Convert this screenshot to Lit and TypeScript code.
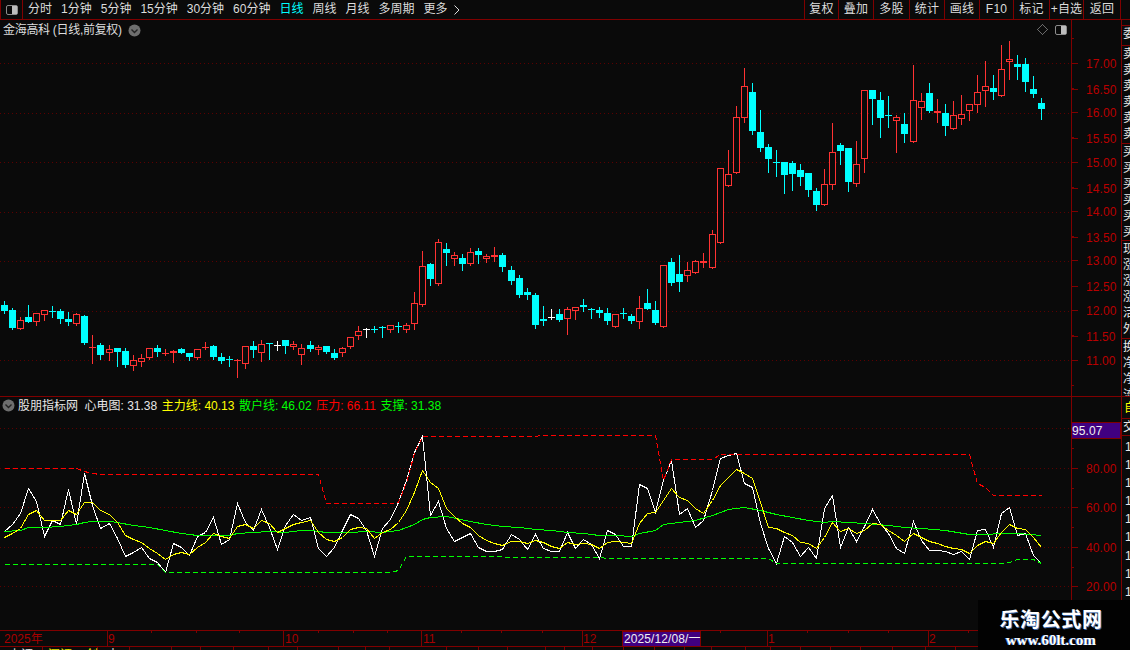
import { LitElement, html, css, svg } from "lit";
import { customElement } from "lit/decorators.js";

type C = [number, number, number, number, string];
const conv = (base: number, rows: C[]): C[] =>
  rows.map(([h, t, b, l, c]) => [
    Math.round(base + h / 3),
    Math.round(base + t / 3),
    Math.round(base + b / 3),
    Math.round(base + l / 3),
    c,
  ]);

const candles: C[] = [
  ...conv(290, [
    [33,44,62,70,"c"],[55,61,113,117,"c"],[82,91,116,117,"r"],[45,82,95,96,"c"],[68,70,97,105,"r"],
    [60,61,76,90,"r"],[48,64,64,80,"c"],[58,64,87,98,"c"],[67,88,95,104,"c"],[70,73,103,104,"r"],
    [75,78,158,161,"c"],[135,170,170,218,"r"],[160,166,194,206,"c"],[166,176,190,209,"r"],[174,174,185,227,"c"],
    [175,183,225,230,"c"],[195,211,227,239,"r"],[192,205,215,227,"r"],[174,175,205,207,"r"],[166,175,186,197,"c"],
    [178,190,193,194,"r"],[180,184,190,216,"r"],[175,178,188,190,"c"],[188,190,200,209,"c"],[178,178,203,206,"r"],
    [157,172,175,177,"r"],[166,168,201,207,"c"],[188,201,212,218,"c"],[197,207,210,228,"c"],[208,211,213,260,"r"],
    [168,169,221,233,"r"],[154,168,179,201,"c"],[151,163,190,212,"r"],[160,160,162,207,"c"],[154,166,166,179,"w"],
    [150,151,167,188,"c"],[152,161,170,176,"r"],[162,175,196,221,"r"],[154,166,176,182,"c"],[165,170,181,191,"r"],
    [168,168,185,188,"c"],[178,190,205,206,"c"],[172,173,190,197,"r"],[142,142,170,175,"r"],[108,122,138,146,"r"],
  ]),
  ...conv(230, [
    [295,297,297,320,"w"],[288,296,296,306,"c"],[288,291,291,320,"c"],[286,286,301,305,"r"],[276,289,289,305,"c"],
    [280,286,299,305,"r"],[186,220,283,296,"r"],[64,109,224,227,"r"],[100,103,146,165,"c"],[28,37,163,164,"r"],
    [39,57,69,105,"c"],[67,76,86,105,"r"],[72,84,102,120,"c"],[55,67,103,106,"r"],[54,63,75,99,"c"],
    [72,79,87,96,"r"],[52,76,82,93,"r"],[69,75,111,123,"c"],[108,120,153,162,"c"],[135,144,195,200,"c"],
    [174,186,195,207,"c"],[190,195,285,294,"c"],[228,267,273,285,"c"],[237,262,262,267,"w"],[237,252,270,273,"c"],
    [231,238,266,312,"r"],[232,232,242,267,"r"],[207,225,231,243,"c"],[234,237,237,264,"c"],[231,240,249,261,"c"],
    [234,249,273,282,"c"],[253,253,290,290,"r"],[234,249,249,264,"c"],[252,258,273,279,"c"],[198,235,275,294,"r"],
    [177,219,237,237,"c"],[213,240,279,282,"c"],[106,106,290,290,"r"],[84,96,159,165,"c"],[75,132,156,183,"c"],
    [96,121,139,153,"r"],[90,94,128,129,"r"],[69,94,98,111,"r"],[0,13,113,114,"r"],
  ]),
  ...conv(60, [
    [325,325,549,549,"r"],[270,343,377,378,"r"],[138,172,338,338,"r"],[24,79,173,186,"r"],[69,96,213,222,"c"],
    [150,216,264,273,"c"],[252,261,297,336,"c"],[270,306,309,348,"c"],[306,306,345,399,"c"],[303,309,342,390,"c"],
    [312,330,351,375,"c"],[339,339,390,408,"c"],[384,393,435,450,"c"],[327,373,434,435,"r"],[189,277,374,387,"r"],
    [249,255,273,312,"c"],[264,264,366,393,"c"],[243,313,371,378,"r"],[90,91,298,336,"r"],[90,90,117,192,"c"],
    [96,120,174,231,"c"],[108,165,168,201,"c"],[165,172,182,276,"r"],[159,192,222,246,"c"],[15,121,245,245,"r"],
    [99,124,143,177,"r"],[69,99,153,156,"c"],[117,153,159,186,"r"],[132,159,198,225,"c"],[123,166,206,206,"r"],
    [105,163,176,192,"r"],[133,133,152,180,"r"],[45,97,134,156,"r"],[3,79,92,138,"r"],[45,84,96,117,"c"],
  ]),
  ...conv(0, [
    [135,208,287,287,"r"],[123,178,185,236,"r"],[165,192,201,237,"c"],[174,192,246,273,"c"],[228,267,282,290,"c"],[294,309,327,357,"c"],
  ]),
];

const cx = (i: number) => Math.round(4 + 8.04 * i);
const RED = "#ff3232";
const CYAN = "#00ffff";

const abs = (base: number, v: number[], start = 0) => v.map((y, k) => [start + k, base + y / 3] as [number, number]);
const keyed = (base: number, v: number[][]) => v.map(([i, y]) => [i, base + y / 3] as [number, number]);
const poly = (p: [number, number][]) => p.map(([i, y]) => `${cx(i) + 0.5},${Math.round(y) + 0.5}`).join(" ");

const white = [
  ...abs(395, [408,388,355,280,318,424,374,388,282,386,235,330,400,385,430,484,470,455,488,500,530,445,455,480,424,410,367,448,432,325,380,405,343,395,462,390,358,375,365,458,484,455,405,358,368,405,484,400,372,322,255,170,122,360,318,400]),
  ...abs(425, [348,335,323,366,378,379,373,328,342,372,327,370,379,379,320,370,343,358,400,316,328,364,364], 56),
  ...abs(420, [192,205,275,180,120,282,265,322,300,210,115,106,100,188,200,310,385,428,348,365,407,382,415,265,225,382,320,362,318,268,310,340,385,400,303,360,390,390,394,403,393,417,330,327,382,280,262,345,340,405,430], 79),
];
const yellow = [
  ...abs(395, [427,415,398,358,345,375,374,375,345,358,320,322,345,358,380,420,433,440,460,475,493,478,470,477,455,440,415,424,430,393,388,398,376,385,412,400,388,382,375,410,432,437,425,402,395,400,428,410,402,380,345,290,224,262,280,340]),
  ...abs(425, [272,295,305,330,345,355,361,349,349,355,345,352,362,370,352,357,355,358,370,352,347,352,354], 56),
  ...abs(420, [310,280,275,240,205,230,240,265,280,240,195,170,147,160,175,245,322,325,335,345,365,370,385,350,305,332,325,338,330,310,312,330,345,362,340,350,362,370,378,385,388,400,375,362,368,335,312,325,328,350,380], 79),
];
const green = [
  ...keyed(395, [[0,408],[2,405],[3,396],[5,395],[7,394],[9,388],[10,380],[11,377],[13,378],[14,382],[16,390],[18,395],[20,406],[22,415],[24,421],[26,419],[28,420],[29,414],[31,410],[33,409],[35,411],[37,406],[38,404],[40,410],[43,412],[45,408],[47,412],[49,405],[50,397],[51,388],[52,372],[53,366],[55,364]]),
  ...keyed(425, [[58,287],[60,296],[62,304],[64,306],[66,311],[68,316],[70,321],[72,325],[74,329],[76,331],[78,334]]),
  ...keyed(420, [[79,340],[81,330],[82,311],[84,307],[86,300],[88,285],[90,268],[92,262],[94,270],[96,283],[98,290],[100,300],[102,305],[103,302],[105,307],[107,310],[110,315],[112,320],[114,323],[117,330],[120,342],[122,343],[124,340],[126,338],[129,345]]),
];
const redDash = [
  ...keyed(395, [[0,220],[9,220],[10,229],[11,233],[12,236],[39,236],[40,325],[48,325],[49,320],[50,262],[51,175],[52,122]]),
  ...keyed(420, [[81,46],[82,180],[83,118],[88,118],[89,103],[120,103],[121,188],[122,200],[123,226],[129,226]]),
];
const greenDash = [
  ...keyed(395, [[0,508],[19,508],[20,532],[48,532],[49,525],[50,484]]),
  ...keyed(425, [[74,395]]),
  ...keyed(420, [[75,415],[95,415],[96,430],[124,430],[125,425],[126,418],[128,418],[129,430]]),
];

const mainGrid = [63, 113, 162, 212, 261, 311, 360];
const mainLabels: [string, number][] = [
  ["17.00",63],["16.50",89],["16.00",112],["15.50",138],["15.00",162],["14.50",188],["14.00",211],
  ["13.50",237],["13.00",260],["12.50",286],["12.00",310],["11.50",336],["11.00",360],
];
const indGrid = [428, 468, 507, 547, 586];
const indLabels: [string, number][] = [["80.00",468],["60.00",507],["40.00",547],["20.00",586]];
const monthLabels: [string, number][] = [["2025年",4],["9",108],["10",285],["11",423],["12",583],["1",768],["2",929]];
const monthLines = [107, 283, 421, 582, 767, 928];
const dateTicks = [151, 196, 239, 318, 353, 387, 461, 501, 542, 720, 807, 848, 888, 968];
const underTicks = [42,97,129,171,200,233,268,297,338,365,389,446,478,507,545,564,592,623,654,684,711,745,770,800,830,860,892,925,955];

const tabs = ["分时","1分钟","5分钟","15分钟","30分钟","60分钟","日线","周线","月线","多周期"];
const actions = ["复权","叠加","多股","统计","画线","F10","标记","+自选","返回"];
const strip = [["卖","卖","卖","卖","卖","卖"],["买","买","买","买","买","买"],["现","涨","涨","涨","活","外"],["换","净","净","流","收","振"]];

const panelIcon = svg`<rect x="0.5" y="0.5" width="11" height="9" rx="1.5" fill="none" stroke="#8c8c8c"/><rect x="6" y="1" width="5" height="8" fill="#bdbdbd"/>`;
const circleIcon = svg`<circle cx="6.5" cy="6.5" r="6" fill="#6e6e6e"/><path d="M3.5 5.5 L6.5 8.5 L9.5 5.5" fill="none" stroke="#222" stroke-width="1.4"/>`;

@customElement("app-root")
export class AppRoot extends LitElement {
  static styles = css`
    :host {
      display: block;
      width: 1130px;
      height: 650px;
      position: relative;
      overflow: hidden;
      background: #0a0a0a;
      color: #dcdcdc;
      font: 12px "Liberation Sans", "Noto Sans CJK SC", sans-serif;
    }
    .toolbar {
      height: 19px;
      display: flex;
      align-items: center;
      border-bottom: 1px solid #800000;
    }
    .corner {
      width: 23px;
      height: 19px;
      box-sizing: border-box;
      border-left: 1px solid #800000;
      border-right: 1px solid #800000;
      display: flex;
      align-items: center;
      justify-content: center;
      flex: none;
    }
    .corner svg { width: 12px; height: 10px; display: block; }
    .tabs { display: flex; gap: 9px; padding-left: 5px; flex: 1; line-height: 19px; white-space: nowrap; }
    .tab-active { color: #00ffff; }
    .more { display: flex; align-items: center; gap: 6px; }
    .more svg { display: block; }
    .actions {
      display: grid;
      grid-template-columns: 34px 35px 36px 35px 35px 34px 36px 34px 37px;
      height: 19px;
      margin-right: 9px;
      border-right: 1px solid #800000;
    }
    .action {
      border-left: 1px solid #800000;
      text-align: center;
      line-height: 19px;
      white-space: nowrap;
      overflow: hidden;
      letter-spacing: 0.2px;
    }
    .row { display: flex; position: relative; }
    .main { height: 376px; border-bottom: 1px solid #800000; }
    .ind { height: 233px; }
    .chart { display: block; width: 1121px; flex: none; }
    .chart text { font: 12px "Liberation Sans", sans-serif; fill: #b80000; letter-spacing: 0.1px; }
    .strip {
      width: 8px;
      border-left: 1px solid #800000;
      overflow: hidden;
      box-sizing: content-box;
      color: #e8e8e8;
      line-height: 16.2px;
      white-space: nowrap;
    }
    .band { border-bottom: 1px solid #800000; padding-left: 1px; height: 96.5px; overflow: hidden; }
    .band-first { height: 19px; margin-top: 5px; border-top: 1px solid #800000; }
    .cell { height: 16.1px; overflow: hidden; }
    .ind-strip .first-cell {
      height: 21px;
      line-height: 22px;
      color: #ffff00;
      padding-left: 2px;
      border-bottom: 1px solid #800000;
    }
    .ind-strip .second-cell {
      height: 16px;
      line-height: 16px;
      padding-left: 1px;
      border-bottom: 1px solid #800000;
    }
    .ind-strip .num { height: 18.1px; line-height: 18px; padding-left: 3px; font-weight: normal; }
    .ind-strip .nums { padding-top: 2px; }
    .legend {
      position: absolute;
      left: 3px;
      top: 1px;
      display: flex;
      align-items: center;
      gap: 6px;
      font-size: 12px;
      line-height: 18px;
      white-space: nowrap;
    }
    .legend-title { letter-spacing: -0.3px; }
    .legend svg { width: 13px; height: 13px; display: block; }
    .legend-ind { left: 2px; top: 0; gap: 0; height: 17px; }
    .legend-ind span { margin-left: 4.5px; }
    .legend-ind span.name { margin-left: 3px; margin-right: 2px; }
    .y { color: #ffff00; }
    .g { color: #00ff00; }
    .r { color: #ff0000; }
    .w { color: #e6e6e6; }
    .corner-tools {
      position: absolute;
      left: 1037px;
      top: 4px;
      display: flex;
      align-items: center;
      gap: 7px;
    }
    .corner-tools svg { display: block; }
    .date { display: block; width: 1130px; height: 20px; }
    .date text { font: 12px "Liberation Sans", "Noto Sans CJK SC", sans-serif; fill: #a80000; }
    .date text.sel { fill: #f0f0f0; letter-spacing: 0.1px; }
    .date text.white { fill: #e6e6e6; }
    .date text.yellow { fill: #e6e600; }
    .mark {
      position: absolute;
      left: 978px;
      top: 600px;
      width: 152px;
      height: 50px;
      background: #020202;
      display: flex;
      flex-direction: column;
      align-items: center;
      color: #fff;
      padding-right: 6px;
      box-sizing: border-box;
    }
    .mark-cn {
      font: bold 20px "Noto Sans CJK SC", sans-serif;
      letter-spacing: 0.6px;
      line-height: 24px;
      margin-top: 7px;
      text-shadow: 1px 1px 0 #3a66a8;
    }
    .mark-en {
      font: bold 15px "Liberation Serif", serif;
      line-height: 17px;
      margin-top: 1px;
      text-shadow: -1px 0 0 #4d7fd0;
    }
  `;

  private candle([h, t, b, l, c]: C, i: number) {
    const x = cx(i);
    const col = c === "r" ? RED : c === "c" ? CYAN : "#ffffff";
    const doji = b - t <= 1;
    const wick = (y1: number, y2: number) =>
      y2 > y1 ? svg`<rect x=${x} y=${y1} width="1" height=${y2 - y1} fill=${col}></rect>` : null;
    if (doji) {
      return svg`${wick(h, l + 1)}<rect x=${x - 3} y=${t} width="7" height=${Math.max(1, b - t)} fill=${col}></rect>`;
    }
    if (c === "c") {
      return svg`${wick(h, l + 1)}<rect x=${x - 3} y=${t} width="7" height=${b - t} fill=${col}></rect>`;
    }
    return svg`${wick(h, t)}${wick(b, l + 1)}<rect x=${x - 2.5} y=${t + 0.5} width="6" height=${b - t - 1} fill="#0a0a0a" stroke=${col}></rect>`;
  }

  private grid(ys: number[]) {
    return ys.map(
      (y) => svg`<line x1="0" x2="1071" y1=${y + 0.5} y2=${y + 0.5} stroke="#5c0000" stroke-dasharray="1 3"></line>`
    );
  }

  private axis(labels: [string, number][], step: number, minorFrom: number, count: number) {
    const minors = Array.from({ length: count }, (_, k) => minorFrom + k * step);
    return svg`
      <line x1="1071.5" x2="1071.5" y1="0" y2="650" stroke="#800000"></line>
      ${minors.map((y) => svg`<line x1="1071" x2="1074" y1=${y + 0.5} y2=${y + 0.5} stroke="#800000"></line>`)}
      ${labels.map(
        ([t, y]) => svg`
          <line x1="1071" x2="1078" y1=${y + 0.5} y2=${y + 0.5} stroke="#800000"></line>
          <text x="1086" y=${y + 5}>${t}</text>`
      )}`;
  }

  render() {
    return html`
      <div class="toolbar">
        <div class="corner"><svg viewBox="0 0 12 10">${panelIcon}</svg></div>
        <div class="tabs">
          ${tabs.map((t) => html`<span class=${t === "日线" ? "tab-active" : ""}>${t}</span>`)}
          <span class="more">更多<svg width="6" height="10" viewBox="0 0 6 10"><path d="M0.5 0.5 L5 5 L0.5 9.5" fill="none" stroke="#dcdcdc"/></svg></span>
        </div>
        <div class="actions">${actions.map((a) => html`<div class="action">${a}</div>`)}</div>
      </div>

      <div class="row main">
        <svg class="chart" width="1121" height="376" viewBox="0 20 1121 376" shape-rendering="crispEdges">
          ${this.grid(mainGrid)}
          ${this.axis(mainLabels, 49.5, 38, 8)}
          ${candles.map((c, i) => this.candle(c, i))}
        </svg>
        <div class="strip">
          <div class="band band-first"><div class="cell">委</div></div>
          ${strip.map(
            (b) => html`<div class="band">${b.map((c) => html`<div class="cell">${c}</div>`)}</div>`
          )}
        </div>
        <div class="legend">
          <span class="legend-title">金海高科 (日线,前复权)</span>
          <svg viewBox="0 0 13 13">${circleIcon}</svg>
        </div>
        <div class="corner-tools">
          <svg width="11" height="11" viewBox="0 0 11 11" shape-rendering="crispEdges"><path d="M5.5 0.5 L10.5 5.5 L5.5 10.5 L0.5 5.5 Z" fill="none" stroke="#6a6a6a"/></svg>
          <svg width="12" height="10" viewBox="0 0 12 10">${panelIcon}</svg>
        </div>
      </div>

      <div class="row ind">
        <svg class="chart" width="1121" height="233" viewBox="0 397 1121 233" shape-rendering="crispEdges">
          ${this.grid(indGrid)}
          ${this.axis(indLabels, 39.5, 448, 4)}
          <rect x="1071" y="422" width="50" height="17" fill="#800000"></rect>
          <rect x="1072" y="423" width="48" height="15" fill="#400080"></rect>
          <text x="1072" y="435" style="fill:#f0f0f0">95.07</text>
          <polyline points=${poly(white)} fill="none" stroke="#ffffff"></polyline>
          <polyline points=${poly(green)} fill="none" stroke="#00ff00"></polyline>
          <polyline points=${poly(yellow)} fill="none" stroke="#ffff00"></polyline>
          <polyline points=${poly(redDash)} fill="none" stroke="#ff0000" stroke-dasharray="5 3"></polyline>
          <polyline points=${poly(greenDash)} fill="none" stroke="#00ff00" stroke-dasharray="5 3"></polyline>
        </svg>
        <div class="strip ind-strip">
          <div class="first-cell">自</div>
          <div class="second-cell">交</div>
          <div class="nums">
            ${Array.from({ length: 11 }, () => html`<div class="num">1</div>`)}
          </div>
        </div>
        <div class="legend legend-ind">
          <svg viewBox="0 0 13 13">${circleIcon}</svg>
          <span class="name w">股朋指标网</span>
          <span class="w">心电图: 31.38</span>
          <span class="y">主力线: 40.13</span>
          <span class="g">散户线: 46.02</span>
          <span class="r">压力: 66.11</span>
          <span class="g">支撑: 31.38</span>
        </div>
      </div>

      <svg class="date" viewBox="0 630 1130 20" shape-rendering="crispEdges">
        <line x1="0" x2="1130" y1="630.5" y2="630.5" stroke="#800000"></line>
        <line x1="0" x2="1130" y1="646.5" y2="646.5" stroke="#800000"></line>
        ${monthLines.map((x) => svg`<line x1=${x + 0.5} x2=${x + 0.5} y1="630" y2="646" stroke="#800000"></line>`)}
        ${dateTicks.map((x) => svg`<line x1=${x + 0.5} x2=${x + 0.5} y1="630" y2="633" stroke="#800000"></line>`)}
        ${underTicks.map((x) => svg`<line x1=${x + 0.5} x2=${x + 0.5} y1="646" y2="650" stroke="#800000"></line>`)}
        ${monthLabels.map(([t, x]) => svg`<text x=${x} y="643">${t}</text>`)}
        <rect x="622" y="631" width="78" height="15" fill="#400080" stroke="#800000"></rect>
        <text class="sel" x="624" y="643">2025/12/08/一</text>
        <text class="white" x="9" y="659">上证</text>
        <text class="yellow" x="48" y="659">深证</text>
        <text class="yellow" x="86" y="659">创</text>
        <text class="white" x="107" y="659">中</text>
      </svg>

      <div class="mark">
        <div class="mark-cn">乐淘公式网</div>
        <div class="mark-en">www.60lt.com</div>
      </div>
    `;
  }
}
